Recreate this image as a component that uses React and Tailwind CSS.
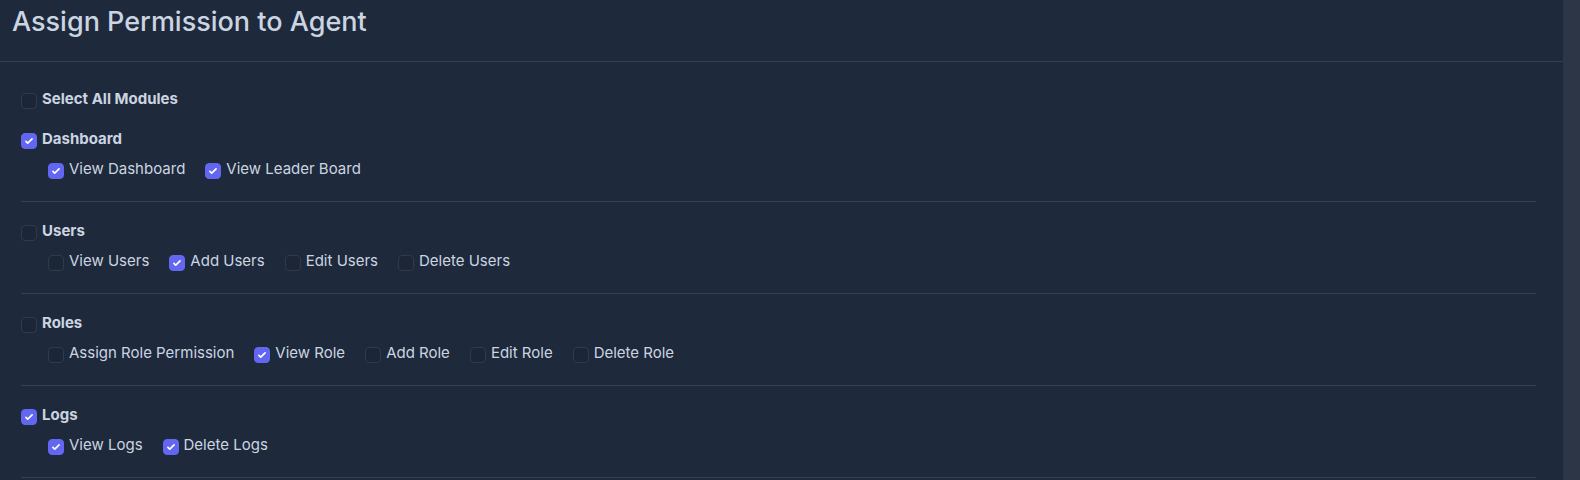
import React, { useState } from "react";

const modules = [
  {
    name: "Dashboard",
    perms: [
      { label: "View Dashboard", on: true },
      { label: "View Leader Board", on: true },
    ],
  },
  {
    name: "Users",
    perms: [
      { label: "View Users", on: false },
      { label: "Add Users", on: true },
      { label: "Edit Users", on: false },
      { label: "Delete Users", on: false },
    ],
  },
  {
    name: "Roles",
    perms: [
      { label: "Assign Role Permission", on: false },
      { label: "View Role", on: true },
      { label: "Add Role", on: false },
      { label: "Edit Role", on: false },
      { label: "Delete Role", on: false },
    ],
  },
  {
    name: "Logs",
    perms: [
      { label: "View Logs", on: true },
      { label: "Delete Logs", on: true },
    ],
  },
];

function Check({ checked, onClick }) {
  return (
    <button
      type="button"
      onClick={onClick}
      className={
        "mt-1 w-4 h-4 shrink-0 rounded flex items-center justify-center border " +
        (checked ? "bg-[#6366f1] border-[#6366f1]" : "bg-[#1c2637] border-[#2e3a4e]")
      }
    >
      {checked && (
        <svg viewBox="0 0 16 16" className="w-4 h-4" fill="white">
          <path d="M12.207 4.793a1 1 0 010 1.414l-5 5a1 1 0 01-1.414 0l-2-2a1 1 0 011.414-1.414L6.5 9.086l4.293-4.293a1 1 0 011.414 0z" />
        </svg>
      )}
    </button>
  );
}

export default function App() {
  const [state, setState] = useState(modules.map((m) => m.perms.map((p) => p.on)));
  const [parents, setParents] = useState(modules.map((m) => m.perms.every((p) => p.on)));
  const [all, setAll] = useState(false);

  const toggle = (i, j) => {
    const next = state.map((row) => [...row]);
    next[i][j] = !next[i][j];
    setState(next);
  };

  const toggleParent = (i) => {
    const next = [...parents];
    next[i] = !next[i];
    setParents(next);
  };

  return (
    <div
      className="w-[1580px] h-[480px] overflow-hidden flex bg-[#1e293b]"
      style={{ fontFamily: "Inter, 'Noto Sans', sans-serif" }}
    >
      <div className="flex-1 min-w-0">
        {/* Header */}
        <div className="h-[62px] px-3 pt-[4px] border-b border-[#334155]">
          <h1 className="text-[27px] leading-[36px] font-medium text-[#cbd5e1]">Assign Permission to Agent</h1>
        </div>

        {/* Body */}
        <div className="pl-[21px] pr-[27px] pt-[27px]">
          <div className="flex items-start gap-[5px] h-5 mb-5">
            <Check checked={all} onClick={() => setAll(!all)} />
            <span className="text-[15px] leading-5 font-bold text-[#cbd5e1]">Select All Modules</span>
          </div>

          {modules.map((m, i) => (
            <div key={m.name} className="pb-[22px] mb-[19px] border-b border-[#334155]">
              <div className="flex items-start gap-[5px] h-5">
                <Check checked={parents[i]} onClick={() => toggleParent(i)} />
                <span className="text-[15px] leading-5 font-bold text-[#cbd5e1]">{m.name}</span>
              </div>
              <div className="flex gap-5 pl-[27px] mt-[10px] h-5">
                {m.perms.map((p, j) => (
                  <div key={p.label} className="flex items-start gap-[5px]">
                    <Check checked={state[i][j]} onClick={() => toggle(i, j)} />
                    <span className="text-[15px] leading-5 text-[#cbd5e1]">{p.label}</span>
                  </div>
                ))}
              </div>
            </div>
          ))}
        </div>
      </div>

      {/* Scrollbar track */}
      <div className="w-[17px] shrink-0 bg-[#2c3646]" />
    </div>
  );
}
